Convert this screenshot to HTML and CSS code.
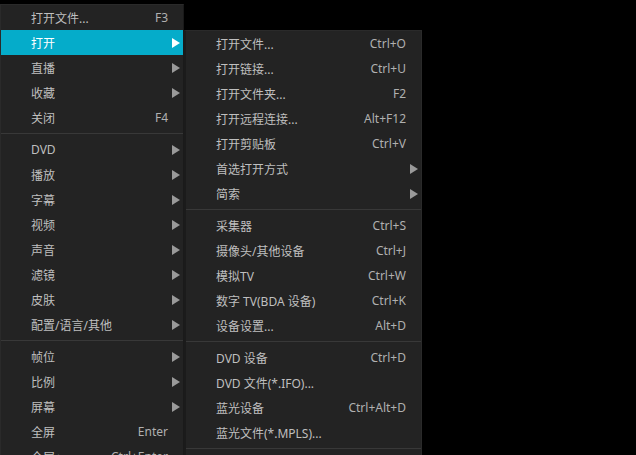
FILE: index.html
```html
<!DOCTYPE html>
<html>

<head>
    <title>菜单</title>
    <link rel="stylesheet" href="styles.css">
</head>

<body>
    <div class="menus">
        <div class="menu main">
            <div class="item"><span class="label">打开文件...</span><span class="key">F3</span><span class="arrow"></span></div>
            <div class="item active"><span class="label">打开</span><span class="key"></span><span class="arrow"><i></i></span></div>
            <div class="item"><span class="label">直播</span><span class="key"></span><span class="arrow"><i></i></span></div>
            <div class="item"><span class="label">收藏</span><span class="key"></span><span class="arrow"><i></i></span></div>
            <div class="item"><span class="label">关闭</span><span class="key">F4</span><span class="arrow"></span></div>
            <div class="sep"></div>
            <div class="item"><span class="label">DVD</span><span class="key"></span><span class="arrow"><i></i></span></div>
            <div class="item"><span class="label">播放</span><span class="key"></span><span class="arrow"><i></i></span></div>
            <div class="item"><span class="label">字幕</span><span class="key"></span><span class="arrow"><i></i></span></div>
            <div class="item"><span class="label">视频</span><span class="key"></span><span class="arrow"><i></i></span></div>
            <div class="item"><span class="label">声音</span><span class="key"></span><span class="arrow"><i></i></span></div>
            <div class="item"><span class="label">滤镜</span><span class="key"></span><span class="arrow"><i></i></span></div>
            <div class="item"><span class="label">皮肤</span><span class="key"></span><span class="arrow"><i></i></span></div>
            <div class="item"><span class="label">配置/语言/其他</span><span class="key"></span><span class="arrow"><i></i></span></div>
            <div class="sep"></div>
            <div class="item"><span class="label">帧位</span><span class="key"></span><span class="arrow"><i></i></span></div>
            <div class="item"><span class="label">比例</span><span class="key"></span><span class="arrow"><i></i></span></div>
            <div class="item"><span class="label">屏幕</span><span class="key"></span><span class="arrow"><i></i></span></div>
            <div class="item"><span class="label">全屏</span><span class="key">Enter</span><span class="arrow"></span></div>
            <div class="item"><span class="label">全屏+</span><span class="key">Ctrl+Enter</span><span class="arrow"></span></div>
        </div>

        <div class="menu sub">
            <div class="item"><span class="label">打开文件...</span><span class="key">Ctrl+O</span><span class="arrow"></span></div>
            <div class="item"><span class="label">打开链接...</span><span class="key">Ctrl+U</span><span class="arrow"></span></div>
            <div class="item"><span class="label">打开文件夹...</span><span class="key">F2</span><span class="arrow"></span></div>
            <div class="item"><span class="label">打开远程连接...</span><span class="key">Alt+F12</span><span class="arrow"></span></div>
            <div class="item"><span class="label">打开剪贴板</span><span class="key">Ctrl+V</span><span class="arrow"></span></div>
            <div class="item"><span class="label">首选打开方式</span><span class="key"></span><span class="arrow"><i></i></span></div>
            <div class="item"><span class="label">简索</span><span class="key"></span><span class="arrow"><i></i></span></div>
            <div class="sep"></div>
            <div class="item"><span class="label">采集器</span><span class="key">Ctrl+S</span><span class="arrow"></span></div>
            <div class="item"><span class="label">摄像头/其他设备</span><span class="key">Ctrl+J</span><span class="arrow"></span></div>
            <div class="item"><span class="label">模拟TV</span><span class="key">Ctrl+W</span><span class="arrow"></span></div>
            <div class="item"><span class="label">数字 TV(BDA 设备)</span><span class="key">Ctrl+K</span><span class="arrow"></span></div>
            <div class="item"><span class="label">设备设置...</span><span class="key">Alt+D</span><span class="arrow"></span></div>
            <div class="sep"></div>
            <div class="item"><span class="label">DVD 设备</span><span class="key">Ctrl+D</span><span class="arrow"></span></div>
            <div class="item"><span class="label">DVD 文件(*.IFO)...</span><span class="key"></span><span class="arrow"></span></div>
            <div class="item"><span class="label">蓝光设备</span><span class="key">Ctrl+Alt+D</span><span class="arrow"></span></div>
            <div class="item"><span class="label">蓝光文件(*.MPLS)...</span><span class="key"></span><span class="arrow"></span></div>
            <div class="sep"></div>
            <div class="item"></div>
        </div>
    </div>
</body>

</html>
```

FILE: styles.css
```css
html, body {
    margin: 0;
    background: #000;
    height: 455px;
    overflow: hidden;
}

body {
    font-family: "Noto Sans", "Noto Sans CJK SC", sans-serif;
    font-size: 12px;
    color: #bfbfbf;
}

.menus {
    display: flex;
    align-items: flex-start;
}

.menu {
    background: #232323;
    box-sizing: border-box;
}

.main {
    margin-top: 4px;
    width: 184px;
    border-top: 1px solid #2a2a2a;
    border-left: 1px solid #2a2a2a;
    border-right: 1px solid #1a1a1a;
}

.sub {
    margin-top: 30px;
    width: 238px;
    border-top: 1px solid #2a2a2a;
    border-left: 2px solid #1b1b1b;
    border-right: 1px solid #2a2a2a;
}

.item {
    display: flex;
    align-items: center;
    height: 25px;
    padding-left: 30px;
    white-space: nowrap;
}

.label {
    flex: 1;
}

.key {
    color: #b0b0b0;
}

.arrow {
    width: 15px;
    display: flex;
    justify-content: flex-end;
    padding-right: 3px;
    box-sizing: border-box;
}

.arrow i {
    width: 0;
    height: 0;
    border-left: 8px solid #9a9a9a;
    border-top: 5px solid transparent;
    border-bottom: 5px solid transparent;
}

.active {
    background: #05acca;
    color: #fff;
}

.active .arrow i {
    border-left-color: #fff;
}

.sep {
    height: 7px;
    display: flex;
    align-items: center;
}

.sep::after {
    content: "";
    flex: 1;
    height: 1px;
    background: #383838;
}
```
